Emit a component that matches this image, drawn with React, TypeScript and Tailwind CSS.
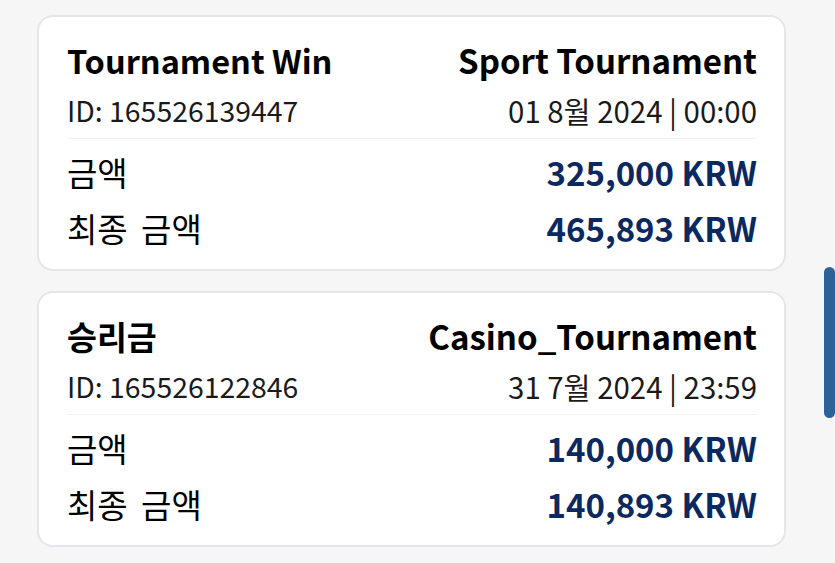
import React from "react";

type Item = {
  title: string;
  type: string;
  id: string;
  date: string;
  amount: string;
  final: string;
};

const items: Item[] = [
  {
    title: "Tournament Win",
    type: "Sport Tournament",
    id: "165526139447",
    date: "01 8월 2024 | 00:00",
    amount: "325,000 KRW",
    final: "465,893 KRW",
  },
  {
    title: "승리금",
    type: "Casino_Tournament",
    id: "165526122846",
    date: "31 7월 2024 | 23:59",
    amount: "140,000 KRW",
    final: "140,893 KRW",
  },
];

function Card({ it }: { it: Item }) {
  return (
    <div className="rounded-[16px] border-2 border-[#e4e6ea] bg-white pl-[28px] pr-[27px] pt-[22px] pb-[13px]">
      <div className="flex items-center justify-between h-[42px] leading-none">
        <span className="text-[32.5px] font-semibold text-black">{it.title}</span>
        <span className="text-[33px] font-semibold text-black">{it.type}</span>
      </div>
      <div className="flex items-center justify-between h-[58px] border-b border-[#f0f1f3] leading-none pt-[2px]">
        <span className="text-[28.4px] text-[#1a1a1a]">ID: {it.id}</span>
        <span className="text-[29.4px] text-[#1a1a1a]">{it.date}</span>
      </div>
      <div className="flex items-center justify-between h-[56px] mt-[5px] leading-none">
        <span className="text-[33px] text-black">금액</span>
        <span className="text-[33px] font-semibold text-[#0b2960]">{it.amount}</span>
      </div>
      <div className="flex items-center justify-between h-[56px] leading-none">
        <span className="text-[33px] text-black [word-spacing:6px]">최종 금액</span>
        <span className="text-[33px] font-semibold text-[#0b2960]">{it.final}</span>
      </div>
    </div>
  );
}

export default function App() {
  return (
    <div
      className="relative w-[835px] h-[563px] overflow-hidden bg-[#f6f6f7]"
      style={{ fontFamily: '"Noto Sans CJK KR", "Noto Sans", sans-serif' }}
    >
      <div className="flex flex-col gap-[20px] pl-[37px] pr-[49px] pt-[15px]">
        {items.map((it) => (
          <Card key={it.id} it={it} />
        ))}
      </div>
      <div className="absolute left-[824px] top-[267px] w-[11px] h-[151px] rounded-full bg-[#2a6299]" />
    </div>
  );
}
